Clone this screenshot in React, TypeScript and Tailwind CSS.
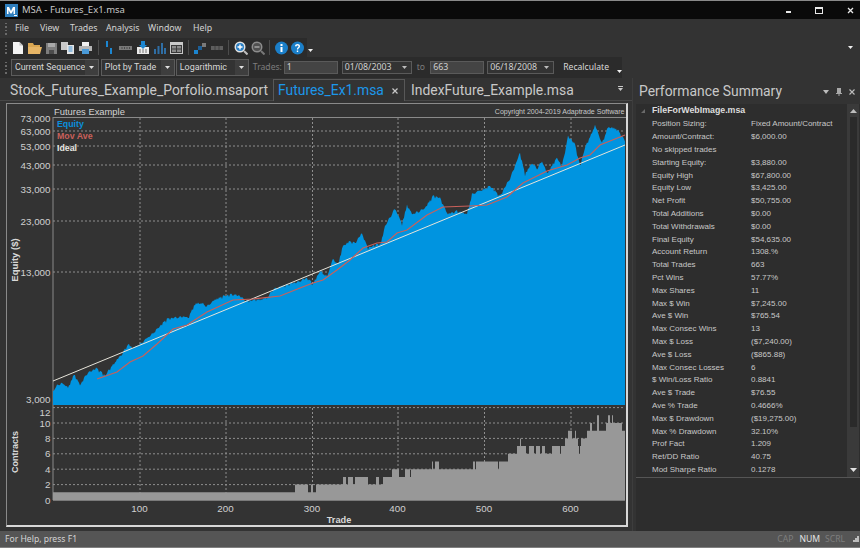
const GRID = "#8f8f8f";

// [x, y] points read off the equity curve
const equityPts: [number, number][] = [
  [53, 390], [58, 383], [63, 382], [68, 387], [74, 373], [80, 384], [87, 372], [97, 367], [105, 375], [113, 363],
  [122, 353], [128, 343], [133, 347], [140, 343], [147, 337], [157, 328], [167, 318], [183, 315], [188, 317], [195, 303],
  [202, 302], [207, 305], [217, 297], [233, 293], [240, 295], [247, 300], [267, 297], [273, 288], [293, 282], [307, 277],
  [313, 283], [320, 270], [327, 275], [333, 258], [338, 263], [343, 245], [350, 240], [355, 242], [362, 232],
  [368, 247], [381, 242], [385, 225], [395, 207], [402, 223], [407, 204], [412, 213], [425, 207], [433, 195], [440, 197],
  [448, 213], [457, 210], [467, 213], [472, 193], [490, 185], [500, 195], [510, 177], [520, 152], [525, 173], [532, 162],
  [537, 167], [542, 160], [547, 172], [557, 157], [562, 165], [568, 135], [575, 143], [580, 165], [585, 147], [595, 124],
  [602, 142], [608, 126], [617, 128], [622, 135], [625, 140],
];

const movePts: [number, number][] = [
  [97, 379], [117, 372], [130, 362], [143, 356], [157, 344], [173, 329], [187, 325], [207, 312], [233, 300], [253, 299],
  [280, 296], [300, 288], [313, 283], [323, 280], [337, 270], [350, 260], [363, 248], [377, 243], [387, 242], [397, 233],
  [407, 230], [427, 215], [443, 207], [470, 206], [487, 205], [507, 197], [523, 183], [547, 171], [567, 165], [580, 158],
  [590, 155], [600, 145], [610, 141], [625, 135],
];

// [until x, contracts]
const contractSteps: [number, number][] = [
  [295, 1], [308, 2], [311, 1], [313, 2], [316, 1], [343, 2], [346, 3], [348, 2], [353, 3], [355, 2], [368, 3], [376, 2],
  [379, 3], [383, 2], [392, 3], [399, 4], [405, 3], [410, 4], [411, 3], [432, 4], [433, 5], [435, 4], [439, 5], [473, 4],
  [475, 5], [476, 4], [478, 5], [498, 5], [499, 4], [508, 5], [517, 6], [520, 7], [521, 8], [526, 7], [529, 6], [534, 7],
  [536, 6], [540, 7], [542, 6], [545, 7], [552, 6], [560, 7], [561, 6], [565, 7], [568, 8], [569, 9], [572, 9], [575, 8],
  [576, 9], [578, 8], [579, 7], [580, 6], [581, 7], [587, 8], [590, 9], [592, 10], [597, 9], [599, 11], [606, 9], [608, 10],
  [610, 11], [612, 10], [613, 11], [622, 10], [625, 9],
];

function equityPath() {
  let d = "M53 405 L53 390";
  let i = 0;
  for (let x = 53; x <= 625; x++) {
    while (i < equityPts.length - 2 && equityPts[i + 1][0] < x) i++;
    const [x0, y0] = equityPts[i];
    const [x1, y1] = equityPts[i + 1];
    const y = y0 + ((y1 - y0) * (x - x0)) / (x1 - x0);
    const noise = Math.abs(Math.sin(x * 2.3) * 1.6 + Math.sin(x * 0.71) * 1.1 + Math.sin(x * 5.1));
    d += ` L${x} ${(y + noise).toFixed(1)}`;
  }
  return d + " L625 405 Z";
}

function contractsPath() {
  const yOf = (n: number) => 500 - 7.7 * n;
  let d = `M53 500 L53 ${yOf(1)}`;
  let from = 53;
  for (const [to, n] of contractSteps) {
    d += ` L${from} ${yOf(n)} L${to} ${yOf(n)}`;
    from = to;
  }
  return d + " L625 500 Z";
}

const yTicks: [string, number][] = [
  ["73,000", 118], ["63,000", 131], ["53,000", 146], ["43,000", 165], ["33,000", 189], ["23,000", 221], ["13,000", 272],
];
const cTicks = [12, 10, 8, 6, 4, 2, 0];
const xTicks: [string, number][] = [["100", 140], ["200", 226], ["300", 312.5], ["400", 398], ["500", 484.5], ["600", 571]];

function Chart() {
  return (
    <div className="ml-[6px] mt-[2px] w-[622px] h-[424px] border border-t-[#8a8a8a] border-l-[#8a8a8a] border-r-[#d8d8d8] border-b-[#d8d8d8] border-r-2 border-b-2 bg-[#333333]">
      <svg width="619" height="421" viewBox="7 104 619 421" className="block font-['Liberation_Sans']">
        <text x="54" y="114.5" fontSize="9.4" fill="#d4d4d4">Futures Example</text>
        <text x="624.5" y="114" fontSize="7.05" fill="#c8c8c8" textAnchor="end">Copyright 2004-2019 Adaptrade Software</text>
        <line x1="53" y1="117.5" x2="626" y2="117.5" stroke="#8a8a8a" />
        <line x1="53" y1="117" x2="53" y2="500" stroke="#8a8a8a" />

        {yTicks.slice(1).map(([, y]) => (
          <line key={y} x1="53" y1={y} x2="625" y2={y} stroke={GRID} strokeDasharray="2 2" />
        ))}
        {xTicks.map(([, x]) => (
          <line key={x} x1={x} y1="118" x2={x} y2="405" stroke={GRID} strokeDasharray="2 2" />
        ))}
        <path d={equityPath()} fill="#0094e0" />
        <polyline points="53,381 625,145" fill="none" stroke="#e6e4da" strokeWidth="1" />
        <polyline points={movePts.map((p) => p.join(",")).join(" ")} fill="none" stroke="#c9605a" strokeWidth="1.2" />

        {yTicks.map(([label, y]) => (
          <text key={label} x="50.5" y={y + 3.5} fontSize="9.8" fill="#d0d0d0" textAnchor="end">{label}</text>
        ))}
        <text x="50.5" y="402.5" fontSize="9.8" fill="#d0d0d0" textAnchor="end">3,000</text>

        <text x="57" y="127" fontSize="8.8" fontWeight="700" fill="#0a8fdc">Equity</text>
        <text x="57" y="139" fontSize="8.8" fontWeight="700" fill="#c9605a">Mov Ave</text>
        <text x="57" y="151" fontSize="8.8" fontWeight="700" fill="#e6e6e0">Ideal</text>

        <text transform="translate(17.5 260) rotate(-90)" fontSize="9.5" fontWeight="700" fill="#d8d8d8" textAnchor="middle">Equity ($)</text>
        <text transform="translate(17.5 452) rotate(-90)" fontSize="9" fontWeight="700" fill="#d8d8d8" textAnchor="middle">Contracts</text>

        {cTicks.map((n) => (
          <g key={n}>
            {n > 0 && <line x1="53" y1={500 - 7.7 * n} x2="625" y2={500 - 7.7 * n} stroke={GRID} strokeDasharray="2 2" />}
            <text x="50.5" y={n === 12 ? 415.5 : 503.5 - 7.7 * n} fontSize="9.8" fill="#d0d0d0" textAnchor="end">{n}</text>
          </g>
        ))}
        {xTicks.map(([, x]) => (
          <line key={x} x1={x} y1="408" x2={x} y2="500" stroke={GRID} strokeDasharray="2 2" />
        ))}
        <path d={contractsPath()} fill="#989898" />
        <line x1="53" y1="500.5" x2="625" y2="500.5" stroke="#7a7a7a" />

        {xTicks.map(([label, x]) => (
          <text key={label} x={x - 0.5} y="512" fontSize="9.8" fill="#d0d0d0" textAnchor="middle">{label}</text>
        ))}
        <text x="339" y="523" fontSize="9.2" fontWeight="700" fill="#d8d8d8" textAnchor="middle">Trade</text>
      </svg>
    </div>
  );
}

const rows: [string, string][] = [
  ["Position Sizing:", "Fixed Amount/Contract"],
  ["Amount/Contract:", "$6,000.00"],
  ["No skipped trades", ""],
  ["Starting Equity:", "$3,880.00"],
  ["Equity High", "$67,800.00"],
  ["Equity Low", "$3,425.00"],
  ["Net Profit", "$50,755.00"],
  ["Total Additions", "$0.00"],
  ["Total Withdrawals", "$0.00"],
  ["Final Equity", "$54,635.00"],
  ["Account Return", "1308.%"],
  ["Total Trades", "663"],
  ["Pct Wins", "57.77%"],
  ["Max Shares", "11"],
  ["Max $ Win", "$7,245.00"],
  ["Ave $ Win", "$765.54"],
  ["Max Consec Wins", "13"],
  ["Max $ Loss", "($7,240.00)"],
  ["Ave $ Loss", "($865.88)"],
  ["Max Consec Losses", "6"],
  ["$ Win/Loss Ratio", "0.8841"],
  ["Ave $ Trade", "$76.55"],
  ["Ave % Trade", "0.4666%"],
  ["Max $ Drawdown", "($19,275.00)"],
  ["Max % Drawdown", "32.10%"],
  ["Prof Fact", "1.209"],
  ["Ret/DD Ratio", "40.75"],
  ["Mod Sharpe Ratio", "0.1278"],
];

function Gripper() {
  return (
    <div className="w-[3px] h-[12px] ml-[5px] flex flex-col justify-between shrink-0">
      {[0, 1, 2, 3].map((i) => (
        <div key={i} className="w-[2px] h-[1.5px] bg-[#6a6a6a]" />
      ))}
    </div>
  );
}

function Sep() {
  return <div className="w-px h-[15px] bg-[#4c4c4c] shrink-0" />;
}

function Caret({ color = "#e0e0e0" }: { color?: string }) {
  return (
    <svg width="5" height="3" viewBox="0 0 5 3" className="shrink-0">
      <path d="M0 0H5L2.5 3Z" fill={color} />
    </svg>
  );
}

function Icon({ w = 14, children }: { w?: number; children: React.ReactNode }) {
  return (
    <svg width={w} height="14" viewBox={`0 0 ${w} 14`} className="block shrink-0">
      {children}
    </svg>
  );
}

function Combo({ label, w, arrowW = 16 }: { label: string; w: number; arrowW?: number }) {
  return (
    <div className="h-[17px] flex items-center border border-[#5c5c5c] bg-[#333333] shrink-0" style={{ width: w }}>
      <span className="pl-[3px] font-['Roboto'] text-[8.9px] text-[#d8d8d8] flex-1 whitespace-nowrap">{label}</span>
      <div className="h-full flex items-center justify-center bg-[#3e3e3e]" style={{ width: arrowW }}>
        <Caret />
      </div>
    </div>
  );
}

function Input({ value, w }: { value: string; w: number }) {
  return (
    <div className="h-[13px] flex items-center bg-[#444444] border border-[#5a5a5a] text-[8.8px] text-[#d0d0d0] pl-[2px] shrink-0" style={{ width: w }}>
      {value}
    </div>
  );
}

function DateBox({ value, w }: { value: string; w: number }) {
  return (
    <div className="h-[13px] flex items-center justify-between bg-[#333333] border border-[#5a5a5a] text-[8.8px] text-[#d0d0d0] pl-[2px] pr-[4px] shrink-0" style={{ width: w }}>
      {value}
      <Caret color="#bcbcbc" />
    </div>
  );
}

function Toolbar1() {
  return (
    <div className="h-[19px] flex items-center bg-[#333333]">
      <div className="h-full w-[307px] flex items-center bg-[#2b2b2b]">
        <Gripper />
        <div className="ml-[5px] flex items-center">
          <Icon w={10}><path d="M0 1H6.5L10 4.5V13H0Z" fill="#f2f2f2" /><path d="M6.5 1V4.5H10" fill="#bdbdbd" /></Icon>
          <div className="w-[5px]" />
          <Icon><path d="M0 2H5L6 4H12V12H0Z" fill="#d9a651" /><path d="M0 6H14L12 13H0Z" fill="#e6b566" /></Icon>
          <div className="w-[4px]" />
          <Icon w={11}><path d="M0 2H11V13H0Z" fill="#7d7d7d" /><path d="M2 2H9V6H2Z" fill="#a9a9a9" /><path d="M3 9H8V13H3Z" fill="#4c4c4c" /></Icon>
          <div className="w-[4px]" />
          <Icon><path d="M0 1H7V9H0Z" fill="#c9c9c9" /><path d="M6 4H13V13H6Z" fill="#e4e4e4" /><path d="M7.5 6H11.5M7.5 8H11.5M7.5 10H11.5" stroke="#3d8fd1" /></Icon>
          <div className="w-[4px]" />
          <Icon><path d="M3 1H10V5H3Z" fill="#f0f0f0" /><path d="M0 5H13V10H0Z" fill="#b5b5b5" /><path d="M3 8H10V13H3Z" fill="#4a9ad8" /></Icon>
        </div>
        <div className="ml-[5px]"><Sep /></div>
        <div className="ml-[6px] flex items-center">
          <Icon w={8}><path d="M1 0H3V6H1Z" fill="#1c86d1" /><path d="M5 7H7V13H5Z" fill="#1c86d1" /></Icon>
          <div className="w-[6px]" />
          <Icon><path d="M0 5H13V9H0Z" fill="#7a7a7a" /><path d="M3 6V8M5.5 6V8M8 6V8M10.5 6V8" stroke="#4a4a4a" /></Icon>
          <div className="w-[3px]" />
          <Icon><path d="M1 6H13V13H1Z" fill="#ececec" /><path d="M5 0H9V4H11L7 8L3 4H5Z" fill="#1c86d1" /><path d="M3 9H5M6 9H8M9 9H11M3 11H5M6 11H8M9 11H11" stroke="#777" /></Icon>
          <div className="w-[3px]" />
          <Icon><path d="M1 8H3V13H1ZM4.5 5H6.5V13H4.5ZM8 2H10V13H8ZM11 7H13V13H11Z" fill="#2f6ea5" /></Icon>
          <div className="w-[3px]" />
          <Icon><path d="M0 1H13V13H0Z" fill="#c8c8c8" /><path d="M1 4H12V12H1Z" fill="#3a3a3a" /><path d="M2 5H6V7.5H2ZM7 5H11V7.5H7ZM2 8.5H6V11H2ZM7 8.5H11V11H7Z" fill="#8a8a8a" /></Icon>
        </div>
        <div className="ml-[4px]"><Sep /></div>
        <div className="ml-[5px] flex items-center">
          <Icon w={12}><path d="M0 9H4V13H0Z" fill="#1c86d1" /><path d="M4 5H8V9H4Z" fill="#1c5f98" /><path d="M8 2H12V6H8Z" fill="#7a7a7a" /></Icon>
          <div className="w-[5px]" />
          <Icon w={12}><path d="M0 5H12V9H0Z" fill="#5e5e5e" /><path d="M4 5V9M8 5V9" stroke="#404040" /></Icon>
        </div>
        <div className="ml-[5px]"><Sep /></div>
        <div className="ml-[5px] flex items-center">
          <Icon><circle cx="6" cy="6" r="5.5" fill="#e2e2e2" /><circle cx="6" cy="6" r="4" fill="#2a7fc4" /><path d="M3.5 6H8.5M6 3.5V8.5" stroke="#fff" strokeWidth="1.4" /><path d="M10 10L13.5 13.5" stroke="#bdbdbd" strokeWidth="2" /></Icon>
          <div className="w-[3px]" />
          <Icon><circle cx="6" cy="6" r="5.5" fill="#8d8d8d" /><circle cx="6" cy="6" r="4" fill="#505050" /><path d="M3.5 6H8.5" stroke="#aaa" strokeWidth="1.4" /><path d="M10 10L13.5 13.5" stroke="#777" strokeWidth="2" /></Icon>
        </div>
        <div className="ml-[4px]"><Sep /></div>
        <div className="ml-[5px] flex items-center">
          <Icon w={13}><circle cx="6.5" cy="7" r="6.5" fill="#1b7fc9" /><path d="M5.5 3H7.5V5H5.5ZM5.5 6H7.5V11H5.5Z" fill="#fff" /></Icon>
          <div className="w-[3px]" />
          <Icon w={13}><circle cx="6.5" cy="7" r="6.5" fill="#1b7fc9" /><path d="M4 5.2C4 2.4 9.2 2.4 9 5.4C8.9 7 7.1 7 7.1 8.6H5.9C5.9 6.5 7.6 6.4 7.6 5.3C7.6 4.2 5.5 4.2 5.4 5.4ZM5.8 9.5H7.2V11H5.8Z" fill="#fff" /></Icon>
          <div className="ml-[4px] mt-[6px]"><Caret color="#f0f0f0" /></div>
        </div>
      </div>
      <div className="ml-auto mr-[7px]"><svg width="5" height="3" viewBox="0 0 5 3"><path d="M0 0H5L2.5 3Z" fill="#f0f0f0" /></svg></div>
    </div>
  );
}

function Toolbar2() {
  return (
    <div className="h-[21px] flex bg-[#333333]">
      <div className="h-full w-[622px] flex items-center bg-[#2b2b2b]">
        <Gripper />
        <div className="w-[3px]" />
        <Combo label="Current Sequence" w={88} arrowW={13} />
        <div className="w-[2px]" />
        <Combo label="Plot by Trade" w={74} arrowW={13} />
        <div className="w-[1px]" />
        <Combo label="Logarithmic" w={73} arrowW={13} />
        <span className="ml-[4px] w-[32px] text-[8.6px] text-[#7d7d7d]">Trades:</span>
        <Input value="1" w={54} />
        <div className="w-[4px]" />
        <DateBox value="01/08/2003" w={70} />
        <span className="ml-[5px] w-[14px] text-[8.6px] text-[#7d7d7d]">to</span>
        <Input value="663" w={54} />
        <div className="w-[3px]" />
        <DateBox value="06/18/2008" w={67} />
        <span className="ml-[9px] text-[8.6px] text-[#d8d8d8] whitespace-nowrap">Recalculate</span>
        <div className="ml-[8px] mt-[8px]"><Caret color="#f0f0f0" /></div>
      </div>
    </div>
  );
}

export default function App() {
  return (
    <div className="w-[860px] h-[548px] flex flex-col overflow-hidden bg-[#333333] font-['Noto_Sans',sans-serif]">
      {/* title bar */}
      <div className="h-[19px] flex items-center bg-[#0a0a0a] border-t border-[#8a8a8a]">
        <svg width="13" height="13" viewBox="0 0 13 13" className="ml-[5px]">
          <rect width="13" height="13" fill="#2f7fbe" />
          <path d="M2 10V3H4L6 7L8 3H10V10H8.5V6L6.6 9.5H5.4L3.5 6V10Z" fill="#fff" />
          <path d="M9 11H12V12H9Z" fill="#fff" />
        </svg>
        <span className="ml-[4px] text-[9.5px] text-[#c8c8c8]">MSA - Futures_Ex1.msa</span>
        <div className="ml-auto flex items-center">
          <div className="w-[5px] h-[2px] bg-[#e8e8e8] mt-[4px]" />
          <div className="ml-[24px] w-[8px] h-[7px] border border-[#e8e8e8] border-t-2" />
          <svg width="7" height="7" viewBox="0 0 7 7" className="ml-[24px] mr-[6px]">
            <path d="M1 1L6 6M6 1L1 6" stroke="#e8e8e8" strokeWidth="1.3" />
          </svg>
        </div>
      </div>

      {/* menu */}
      <div className="h-[19px] flex items-center bg-[#333333]">
        <Gripper />
        <div className="ml-[7px] flex items-center text-[8.8px] text-[#d4d4d4]">
          <span className="w-[25px]">File</span>
          <span className="w-[30px]">View</span>
          <span className="w-[36px]">Trades</span>
          <span className="w-[42px]">Analysis</span>
          <span className="w-[45px]">Window</span>
          <span>Help</span>
        </div>
      </div>

      <Toolbar1 />
      <Toolbar2 />

      {/* body */}
      <div className="flex-1 flex min-h-0">
        <div className="w-[633px] flex flex-col shrink-0 border-r border-[#3d3d3d]">
          <div className="h-[23px] flex items-end pt-[2px] border-b border-[#474747] pl-[10px] font-['Roboto']">
            <span className="h-[21px] w-[263px] text-[13.9px] leading-[22px] text-[#c8c8c8] whitespace-nowrap">Stock_Futures_Example_Porfolio.msaport</span>
            <div className="h-[22px] w-[132px] -mb-px flex items-center justify-between border border-b-0 border-[#585858] bg-[#333333] pl-[4px] pr-[6px]">
              <span className="text-[13.9px] text-[#1c97ea] whitespace-nowrap">Futures_Ex1.msa</span>
              <svg width="6" height="6" viewBox="0 0 6 6"><path d="M0.5 0.5L5.5 5.5M5.5 0.5L0.5 5.5" stroke="#c8c8c8" strokeWidth="1.2" /></svg>
            </div>
            <span className="h-[21px] ml-[6px] text-[13.9px] leading-[22px] text-[#c8c8c8] whitespace-nowrap">IndexFuture_Example.msa</span>
            <div className="ml-auto mr-[9px] mb-[9px] flex flex-col items-center gap-px">
              <div className="w-[5px] h-px bg-[#c8c8c8]" />
              <Caret color="#c8c8c8" />
            </div>
          </div>
          <Chart />
        </div>

        {/* performance summary */}
        <div className="flex-1 flex flex-col min-w-0 pl-[3px]">
          <div className="h-[26px] flex items-center pl-[3px] pr-[5px] pt-px font-['Roboto']">
            <span className="text-[13.9px] text-[#c8c8c8] whitespace-nowrap">Performance Summary</span>
            <div className="ml-auto flex items-center gap-[7px]">
              <svg width="6" height="4" viewBox="0 0 6 4"><path d="M0 0H6L3 4Z" fill="#bdbdbd" /></svg>
              <svg width="6" height="8" viewBox="0 0 6 8"><path d="M1 0H5V5H6V6H3.5V8H2.5V6H0V5H1Z" fill="#a8a8a8" /></svg>
              <svg width="6" height="6" viewBox="0 0 6 6"><path d="M0.5 0.5L5.5 5.5M5.5 0.5L0.5 5.5" stroke="#bdbdbd" strokeWidth="1.1" /></svg>
            </div>
          </div>
          <div className="h-[374px] flex bg-[#2d2d2d] border-b border-[#555555] font-['Liberation_Sans']">
            <div className="flex-1 min-w-0">
              <div className="h-[14px] flex items-center text-[8.8px] font-bold text-[#dcdcdc]">
                <svg width="4" height="4" viewBox="0 0 4 4" className="ml-[5px]"><path d="M4 0V4H0Z" fill="#6a6a6a" /></svg>
                <span className="ml-[7px]">FileForWebImage.msa</span>
              </div>
              {rows.map(([k, v]) => (
                <div key={k} className="h-[12.8px] flex items-center text-[8px] text-[#c8c8c8] whitespace-nowrap">
                  <span className="ml-[16px] w-[99px] shrink-0">{k}</span>
                  <span>{v}</span>
                </div>
              ))}
            </div>
            <div className="w-[12px] mr-px h-full flex flex-col items-center bg-[#3a3a3a]">
              <svg width="7" height="4" viewBox="0 0 7 4" className="mt-[5px]"><path d="M0 4L3.5 0L7 4Z" fill="#bdbdbd" /></svg>
              <div className="w-[7px] h-[310px] mt-[4px] bg-[#2a2a2a]" />
              <svg width="7" height="4" viewBox="0 0 7 4" className="mt-auto mb-[5px]"><path d="M0 0H7L3.5 4Z" fill="#e0e0e0" /></svg>
            </div>
          </div>
          <div className="flex-1 bg-[#2d2d2d]" />
        </div>
      </div>

      {/* status bar */}
      <div className="h-[17px] flex items-center bg-[#555555] border-b border-[#808080] text-[8.6px] text-[#d4d4d4]">
        <span className="ml-[5px]">For Help, press F1</span>
        <div className="ml-auto flex items-center">
          <span className="text-[#7e7e7e]">CAP</span>
          <span className="ml-[6px] text-[#e4e4e4]">NUM</span>
          <span className="ml-[5px] text-[#7e7e7e]">SCRL</span>
          <svg width="6" height="6" viewBox="0 0 6 6" className="ml-[8px] mr-[1px]"><path d="M4 0H6V2H4ZM2 2H4V4H2ZM4 2H6V4H4ZM0 4H2V6H0ZM2 4H4V6H2ZM4 4H6V6H4Z" fill="#bdbdbd" /></svg>
        </div>
      </div>
    </div>
  );
}
